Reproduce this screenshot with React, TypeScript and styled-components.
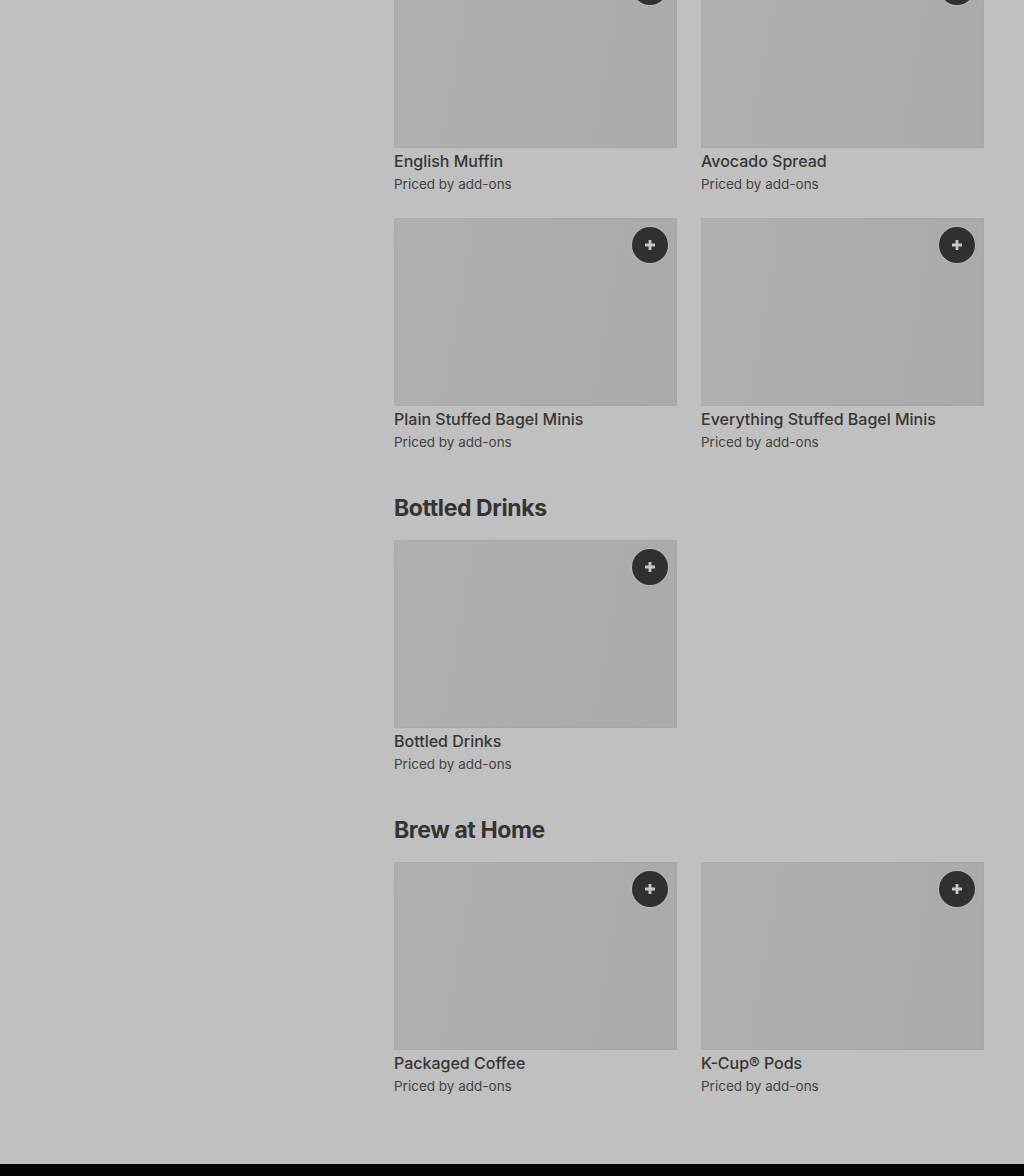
import React from "react";
import styled, { createGlobalStyle } from "styled-components";

type Item = { name: string };
type Section = { title?: string; items: Item[] };

const sections: Section[] = [
  { items: [{ name: "English Muffin" }, { name: "Avocado Spread" }] },
  {
    items: [
      { name: "Plain Stuffed Bagel Minis" },
      { name: "Everything Stuffed Bagel Minis" },
    ],
  },
  { title: "Bottled Drinks", items: [{ name: "Bottled Drinks" }] },
  {
    title: "Brew at Home",
    items: [{ name: "Packaged Coffee" }, { name: "K-Cup® Pods" }],
  },
];

const GlobalStyle = createGlobalStyle`
  html, body {
    margin: 0;
    padding: 0;
    background: #c0c0c0;
  }
  body {
    font-family: Inter, "Liberation Sans", sans-serif;
    color: #353535;
  }
`;

const Page = styled.div`
  width: 1024px;
  height: 1176px;
  overflow: hidden;
  display: flex;
  flex-direction: column;
  background: #c0c0c0;
`;

const Body = styled.div`
  flex: 1;
  display: grid;
  grid-template-columns: 394px 590px;
  overflow: hidden;
`;

const Sidebar = styled.aside``;

const Menu = styled.main`
  margin-top: -40px;
  display: flex;
  flex-direction: column;
`;

const SectionBlock = styled.section<{ $after: number }>`
  padding-bottom: ${(p) => p.$after}px;
`;

const Heading = styled.h2`
  margin: 41px 0 16px;
  font-size: 23px;
  line-height: 32px;
  font-weight: 700;
  letter-spacing: -0.4px;
  color: #343434;
`;

const Grid = styled.div`
  display: grid;
  grid-template-columns: repeat(2, 283px);
  column-gap: 24px;
`;

const Card = styled.div`
  display: flex;
  flex-direction: column;
`;

const Photo = styled.div`
  position: relative;
  height: 188px;
  background: linear-gradient(100deg, #b0b0b0 0%, #adadad 40%, #aaaaaa 100%);
  box-shadow: inset 0 0 0 1px rgba(0, 0, 0, 0.02);
`;

const AddButton = styled.button`
  position: absolute;
  top: 9px;
  right: 9px;
  width: 36px;
  height: 36px;
  border-radius: 50%;
  border: none;
  padding: 0;
  background: #303030;
  display: flex;
  align-items: center;
  justify-content: center;
  box-shadow: 0 0 0 1px rgba(255, 255, 255, 0.15);
`;

const Name = styled.div`
  margin-top: 3px;
  font-size: 16px;
  line-height: 20px;
  font-weight: 500;
  color: #363636;
`;

const Price = styled.div`
  margin-top: 4px;
  font-size: 13.5px;
  line-height: 18px;
  color: #424242;
`;

const Footer = styled.footer`
  height: 12px;
  background: #040404;
`;

const Plus = () => (
  <svg width="12" height="12" viewBox="0 0 12 12">
    <path d="M6 1v10M1 6h10" stroke="#c8c8c8" strokeWidth="2.8" />
  </svg>
);

export default function App() {
  return (
    <Page>
      <GlobalStyle />
      <Body>
        <Sidebar />
        <Menu>
          {sections.map((s, i) => (
            <SectionBlock key={i} $after={i === 0 ? 25 : 0}>
              {s.title && <Heading>{s.title}</Heading>}
              <Grid>
                {s.items.map((it) => (
                  <Card key={it.name}>
                    <Photo>
                      <AddButton aria-label="Add">
                        <Plus />
                      </AddButton>
                    </Photo>
                    <Name>{it.name}</Name>
                    <Price>Priced by add-ons</Price>
                  </Card>
                ))}
              </Grid>
            </SectionBlock>
          ))}
        </Menu>
      </Body>
      <Footer />
    </Page>
  );
}
